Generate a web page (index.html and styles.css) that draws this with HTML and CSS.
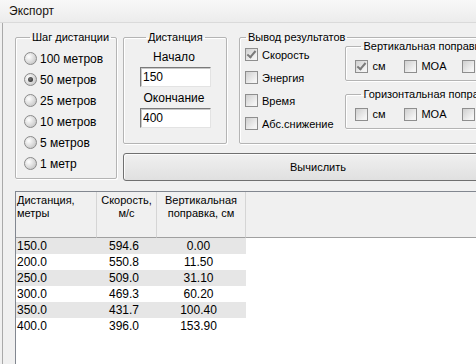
FILE: index.html
```html
<!DOCTYPE html>
<html lang="ru">
<head>
    <meta charset="UTF-8">
    <title>Экспорт</title>
    <link rel="stylesheet" href="styles.css">
</head>
<body>
    <div class="titlebar">Экспорт</div>
    <div class="frame">
        <div class="controls">
            <fieldset class="group step">
                <legend>Шаг дистанции</legend>
                <label class="radio"><span class="dot"></span>100 метров</label>
                <label class="radio checked"><span class="dot"></span>50 метров</label>
                <label class="radio"><span class="dot"></span>25 метров</label>
                <label class="radio"><span class="dot"></span>10 метров</label>
                <label class="radio"><span class="dot"></span>5 метров</label>
                <label class="radio"><span class="dot"></span>1 метр</label>
            </fieldset>

            <div class="right">
                <div class="row">
                    <fieldset class="group range">
                        <legend>Дистанция</legend>
                        <div class="caption first">Начало</div>
                        <div class="input">150</div>
                        <div class="caption">Окончание</div>
                        <div class="input">400</div>
                    </fieldset>

                    <fieldset class="group output">
                        <legend>Вывод результатов</legend>
                        <div class="output-body">
                            <div class="checks">
                                <label class="check checked"><span class="box"></span>Скорость</label>
                                <label class="check"><span class="box"></span>Энергия</label>
                                <label class="check"><span class="box"></span>Время</label>
                                <label class="check"><span class="box"></span>Абс.снижение</label>
                            </div>
                            <div class="corrections">
                                <fieldset class="group inner">
                                    <legend>Вертикальная поправка</legend>
                                    <div class="units">
                                        <label class="check unit checked"><span class="box"></span>см</label>
                                        <label class="check unit wide"><span class="box"></span>MOA</label>
                                        <label class="check unit"><span class="box"></span>тыс.</label>
                                    </div>
                                </fieldset>
                                <fieldset class="group inner second">
                                    <legend>Горизонтальная поправка</legend>
                                    <div class="units">
                                        <label class="check unit"><span class="box"></span>см</label>
                                        <label class="check unit wide"><span class="box"></span>MOA</label>
                                        <label class="check unit"><span class="box"></span>тыс.</label>
                                    </div>
                                </fieldset>
                            </div>
                        </div>
                    </fieldset>
                </div>
                <button class="calc">Вычислить</button>
            </div>
        </div>

        <div class="list">
            <table>
                <colgroup>
                    <col class="c1"><col class="c2"><col class="c3"><col class="c4">
                </colgroup>
                <thead>
                    <tr>
                        <th class="left">Дистанция,<br>метры</th>
                        <th>Скорость,<br>м/с</th>
                        <th>Вертикальная<br>поправка, см</th>
                        <th class="fill"></th>
                    </tr>
                </thead>
                <tbody>
                    <tr class="alt"><td class="left">150.0</td><td>594.6</td><td>0.00</td><td class="fill"></td></tr>
                    <tr><td class="left">200.0</td><td>550.8</td><td>11.50</td><td class="fill"></td></tr>
                    <tr class="alt"><td class="left">250.0</td><td>509.0</td><td>31.10</td><td class="fill"></td></tr>
                    <tr><td class="left">300.0</td><td>469.3</td><td>60.20</td><td class="fill"></td></tr>
                    <tr class="alt"><td class="left">350.0</td><td>431.7</td><td>100.40</td><td class="fill"></td></tr>
                    <tr><td class="left">400.0</td><td>396.0</td><td>153.90</td><td class="fill"></td></tr>
                </tbody>
            </table>
        </div>
    </div>
</body>
</html>
```

FILE: styles.css
```css
body {
    margin: 0;
    background-color: #f0f0f0;
    font-family: "Liberation Sans", Arial, sans-serif;
    font-size: 11px;
    color: #000;
    overflow: hidden;
    width: 476px;
    height: 364px;
}
.titlebar {
    height: 22px;
    line-height: 22px;
    padding-left: 9px;
    font-size: 12px;
    background: linear-gradient(#f8f8f8, #ececec);
    border-bottom: 1px solid #dadada;
    color: #1a1410;
}
.frame {
    margin-left: 2px;
    border-left: 1px solid #a9a9a9;
    padding: 7px 0 0 12px;
    width: 700px;
    height: 400px;
}

/* group boxes */
.controls {
    display: flex;
    align-items: flex-start;
}
.group {
    margin: 0;
    border: 1px solid #b4b4b4;
    border-radius: 2px;
    box-shadow: inset 1px 1px 0 #fff, 1px 1px 0 #fff;
    min-width: 0;
}
.group legend {
    padding: 0 2px;
    margin-left: 6px;
    line-height: 14px;
    white-space: nowrap;
}
.step {
    width: 102px;
    box-sizing: border-box;
    padding: 4px 0 4px 8px;
}
.right {
    margin-left: 6px;
    display: flex;
    flex-direction: column;
}
.row {
    display: flex;
    align-items: stretch;
}
.range {
    width: 104px;
    box-sizing: border-box;
    padding: 0 0 10px 16px;
}
.output {
    margin-left: 12px;
    width: 400px;
    box-sizing: border-box;
    padding: 0 0 8px 0;
}

/* radio buttons */
.radio {
    display: flex;
    align-items: center;
    height: 21px;
    white-space: nowrap;
    font-size: 12px;
}
.dot {
    width: 11px;
    height: 11px;
    border-radius: 50%;
    border: 1px solid #8a8a8a;
    background: radial-gradient(circle at 35% 35%, #ffffff, #d9d9d9 55%, #b8b8b8);
    margin-right: 3px;
    position: relative;
}
.radio.checked .dot::after {
    content: "";
    position: absolute;
    left: 3px;
    top: 3px;
    width: 5px;
    height: 5px;
    border-radius: 50%;
    background: radial-gradient(circle at 40% 40%, #777, #222);
}

/* distance */
.caption {
    margin: 4px 0 0 -16px;
    text-align: center;
    line-height: 14px;
    padding-right: 2px;
    font-size: 12px;
}
.caption.first {
    margin-top: 6px;
}
.input {
    margin-top: 3px;
    width: 71px;
    height: 20px;
    box-sizing: border-box;
    background: #fff;
    border: 1px solid;
    border-color: #7a7a7a #e3e3e3 #e3e3e3 #7a7a7a;
    box-shadow: inset 1px 1px 0 #c8c8c8;
    line-height: 18px;
    padding-left: 2px;
    font-size: 12px;
}

/* checkboxes */
.output-body {
    display: flex;
}
.checks {
    width: 108px;
    padding-left: 5px;
    box-sizing: border-box;
    margin-top: -1px;
}
.check {
    display: flex;
    align-items: center;
    height: 23px;
    white-space: nowrap;
}
.box {
    width: 11px;
    height: 11px;
    border: 1px solid #8e8e8e;
    background: linear-gradient(135deg, #cfcfcf, #f4f4f4 80%);
    margin-right: 4px;
    position: relative;
}
.check.checked .box::after {
    content: "";
    position: absolute;
    left: 3px;
    top: 0px;
    width: 3px;
    height: 7px;
    border: solid #7a7a7a;
    border-width: 0 2px 2px 0;
    transform: rotate(40deg);
}
.corrections {
    margin-top: -5px;
    width: 300px;
}
.inner {
    padding: 3px 0 4px 9px;
}
.inner.second {
    margin-top: 6px;
}
.units {
    display: flex;
}
.unit {
    height: 20px;
    width: 49px;
}
.unit.wide {
    width: 58px;
}

/* button */
.calc {
    margin-top: 9px;
    width: 388px;
    height: 28px;
    border: 1px solid #707070;
    border-radius: 3px;
    background: linear-gradient(#f0f0f0, #e8e8e8 50%, #e0e0e0);
    box-shadow: inset 1px 1px 0 #fcfcfc;
    font-family: "Liberation Sans", Arial, sans-serif;
    font-size: 11px;
    color: #000;
    padding: 0 0 0 2px;
}

/* results list */
.list {
    margin-top: 10px;
    border-left: 1px solid #828790;
    border-top: 1px solid #828790;
    background: #fff;
    height: 200px;
}
table {
    border-collapse: separate;
    border-spacing: 0;
    table-layout: fixed;
    width: 530px;
}
col.c1 { width: 81px; }
col.c2 { width: 60px; }
col.c3 { width: 89px; }
col.c4 { width: 300px; }
th {
    height: 46px;
    box-sizing: border-box;
    padding: 2px 0 0 0;
    vertical-align: top;
    font-weight: normal;
    line-height: 13px;
    background: #f0f0f0;
    border-right: 1px solid #d5d5d5;
    border-bottom: 1px solid #a0a0a0;
    text-align: center;
}
th.left {
    text-align: left;
    padding-left: 1px;
}
th.fill {
    border-right: none;
}
td {
    height: 16px;
    padding: 0 6px 0 0;
    line-height: 16px;
    text-align: center;
    white-space: nowrap;
    font-size: 12px;
}
td.left {
    text-align: left;
    padding-left: 1px;
}
tr.alt td {
    background: #e6e6e6;
}
tr.alt td.fill {
    background: #fff;
}
```
